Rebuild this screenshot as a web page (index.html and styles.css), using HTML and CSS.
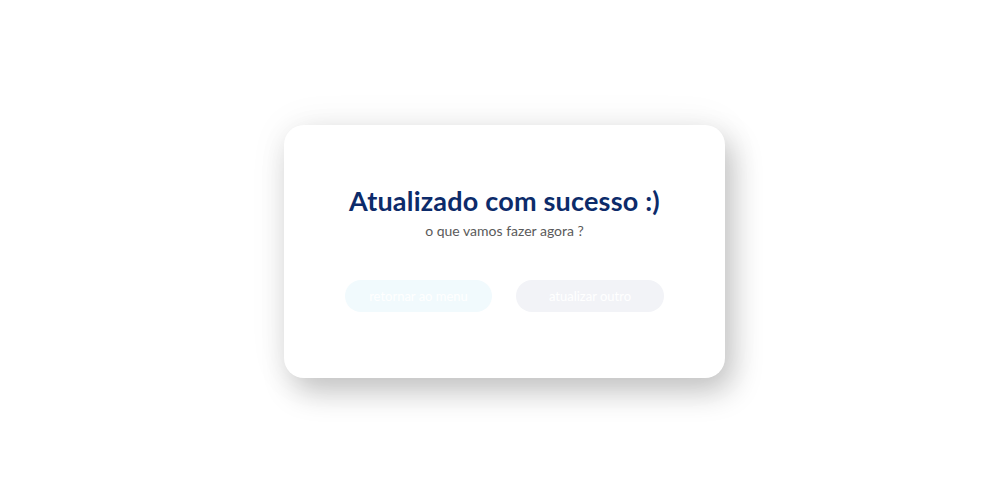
FILE: index.html
```html
<!DOCTYPE html>
<html lang="pt">
<head>
<meta charset="utf-8">
<title>Atualizado</title>
<link rel="stylesheet" href="styles.css">
</head>
<body>
<main class="page">
  <section class="card">
    <h1 class="title">Atualizado com sucesso :)</h1>
    <p class="subtitle">o que vamos fazer agora ?</p>
    <div class="actions">
      <button class="btn btn-menu">retornar ao menu</button>
      <button class="btn btn-other">atualizar outro</button>
    </div>
  </section>
</main>
</body>
</html>
```

FILE: styles.css
```css
* { box-sizing: border-box; }
html, body { margin: 0; padding: 0; background: #ffffff; }
body { font-family: "Lato", "Noto Sans", sans-serif; }
.page {
  width: 1000px;
  height: 500px;
  display: flex;
  justify-content: center;
  align-items: flex-start;
  padding-top: 125px;
  padding-left: 9px;
}
.card {
  width: 441px;
  height: 253px;
  background: #ffffff;
  border-radius: 20px;
  box-shadow: 8px 14px 30px rgba(0, 0, 0, 0.22), 0 0 40px rgba(0, 0, 0, 0.06);
  display: flex;
  flex-direction: column;
  align-items: center;
  padding-top: 60px;
}
.title {
  margin: 0;
  font-size: 27px;
  font-weight: 700;
  color: #0c2b6a;
  line-height: 32px;
  letter-spacing: 0.2px;
}
.subtitle {
  margin: 5px 0 0;
  font-size: 14px;
  color: #5a5a5a;
  line-height: 18px;
}
.actions {
  display: flex;
  gap: 24px;
  margin-top: 40px;
}
.btn {
  width: 147px;
  height: 32px;
  border: none;
  border-radius: 16px;
  color: #ffffff;
  font-family: inherit;
  font-size: 13px;
  padding: 0;
}
.btn-menu { background: #f1fafd; }
.btn-other { background: #f2f3f7; width: 148px; }
```
